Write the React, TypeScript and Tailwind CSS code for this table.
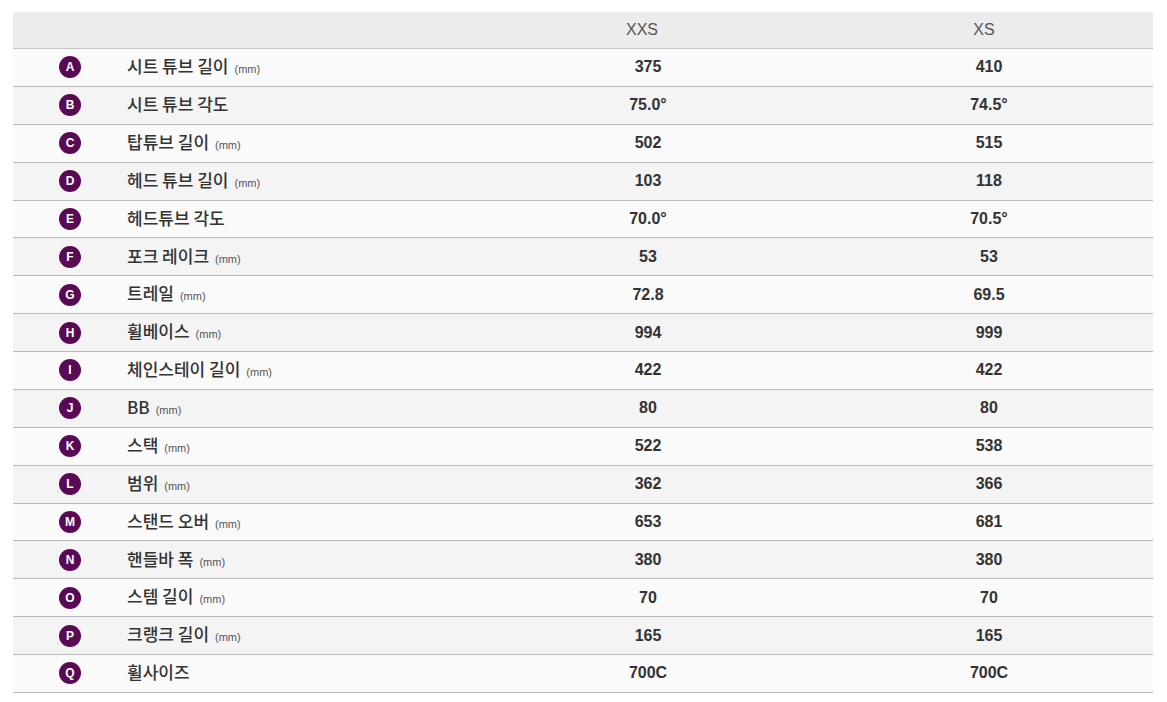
const rows: [string, string, boolean, string, string][] = [
  ['A', '시트 튜브 길이', true, '375', '410'],
  ['B', '시트 튜브 각도', false, '75.0°', '74.5°'],
  ['C', '탑튜브 길이', true, '502', '515'],
  ['D', '헤드 튜브 길이', true, '103', '118'],
  ['E', '헤드튜브 각도', false, '70.0°', '70.5°'],
  ['F', '포크 레이크', true, '53', '53'],
  ['G', '트레일', true, '72.8', '69.5'],
  ['H', '휠베이스', true, '994', '999'],
  ['I', '체인스테이 길이', true, '422', '422'],
  ['J', 'BB', true, '80', '80'],
  ['K', '스택', true, '522', '538'],
  ['L', '범위', true, '362', '366'],
  ['M', '스탠드 오버', true, '653', '681'],
  ['N', '핸들바 폭', true, '380', '380'],
  ['O', '스템 길이', true, '70', '70'],
  ['P', '크랭크 길이', true, '165', '165'],
  ['Q', '휠사이즈', false, '700C', '700C'],
];

export default function App() {
  return (
    <div className="min-h-screen bg-white pt-3 px-[13px] font-['Liberation_Sans',Arial,sans-serif] text-[#333]">
      <div className="w-[1140px]">
        <div className="flex h-[37px] items-center bg-[#ececec] border-b border-[#c6c6c6]">
          <div className="w-[114px]" />
          <div className="w-[342px]" />
          <div className="w-[342px] text-center text-[16px] text-[#555] pl-[4px]">XXS</div>
          <div className="w-[342px] text-center text-[16px] text-[#555] pl-[4px]">XS</div>
        </div>
        {rows.map(([letter, label, mm, a, b], i) => (
          <div
            key={letter}
            className={`flex h-[37.88px] items-center border-b border-[#b9b9b9] ${
              i % 2 === 0 ? 'bg-[#fafafa]' : 'bg-[#f4f4f4]'
            }`}
          >
            <div className="w-[114px] flex justify-center">
              <span className="flex h-[22px] w-[22px] items-center justify-center rounded-full bg-[#5a0a55] text-[12px] font-bold text-white">
                {letter}
              </span>
            </div>
            <div className="w-[342px] flex items-baseline mb-[3px]">
              <span className="font-['Noto_Sans_CJK_KR','Noto_Sans',sans-serif] text-[17px] font-medium text-[#333]">
                {label}
              </span>
              {mm && <span className="ml-[6px] text-[11px] text-[#555]">(mm)</span>}
            </div>
            <div className="w-[342px] text-center text-[16px] font-bold pl-[16px]">{a}</div>
            <div className="w-[342px] text-center text-[16px] font-bold pl-[14px]">{b}</div>
          </div>
        ))}
      </div>
    </div>
  );
}
